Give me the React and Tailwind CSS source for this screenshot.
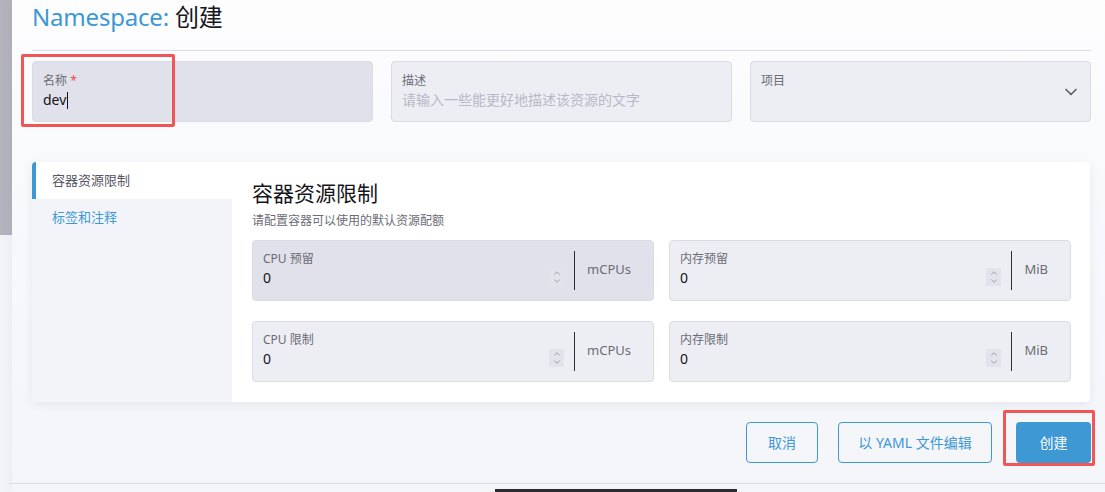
import { ChevronDown, ChevronUp } from 'lucide-react';

const font = { fontFamily: '"Noto Sans", "Noto Sans CJK SC", sans-serif' };

function Stepper() {
  return (
    <div className="w-[15px] h-[18px] bg-[#e3e4eb] flex flex-col items-center justify-center text-[#7a7b86]">
      <ChevronUp size={10} strokeWidth={1.6} className="-mb-[2px]" />
      <ChevronDown size={10} strokeWidth={1.6} />
    </div>
  );
}

function UnitField({ label, unit, hover }) {
  return (
    <div
      className={`h-[61px] rounded-[4px] border border-[#dadbe3] flex items-stretch ${
        hover ? 'bg-[#e0e1ea]' : 'bg-[#edeef3]'
      }`}
    >
      <div className="flex-1 pl-[10px] pt-[10px]">
        <div className="text-[12px] leading-[16px] text-[#6b6c76]">{label}</div>
        <div className="text-[14px] leading-[20px] text-[#141419] mt-[1px]">0</div>
      </div>
      <div className="flex items-center pr-[10px] pt-[12px]">
        <Stepper />
      </div>
      <div className="flex items-center py-[10px]">
        <div className="w-px h-full bg-[#2e2e36]" />
      </div>
      <div className="flex items-center pl-[12px] pr-[22px] pb-[2px] text-[13px] text-[#6b6c76]">{unit}</div>
    </div>
  );
}

export default function App() {
  return (
    <div className="relative w-full h-[492px] overflow-hidden bg-[#f4f5f9] flex" style={font}>
      {/* left strip */}
      <div className="w-[12px] shrink-0">
        <div className="h-[235px] bg-[#b4b4bf]" />
      </div>

      <div className="flex-1 flex flex-col bg-linear-to-b from-[#fdfdfe] via-[#f7f8fb] to-[#f4f5f9] shadow-[-6px_0_10px_rgba(0,0,0,0.03)]">
        <div className="pl-[20px] pr-[14px] flex-1">
          {/* title */}
          <div className="h-[51px] border-b border-[#dcdce6] pt-[1px]">
            <h1 className="text-[24px] leading-[32px] tracking-[-0.2px]">
              <span className="text-[#3d98d3]">Namespace: </span>
              <span className="text-[#17171c]">创建</span>
            </h1>
          </div>

          {/* main fields */}
          <div className="grid grid-cols-3 gap-[18px] mt-[10px]">
            <div className="h-[61px] rounded-[4px] border border-[#dadbe3] bg-[#e0e1ea] px-[10px] pt-[11px]">
              <div className="text-[12px] leading-[16px] text-[#6b6c76]">
                名称 <span className="text-[#ef4b4b]">*</span>
              </div>
              <div className="text-[14px] leading-[20px] text-[#141419] mt-[1px] flex items-center">
                dev<span className="w-px h-[17px] bg-[#141419] ml-[1px]" />
              </div>
            </div>
            <div className="h-[61px] rounded-[4px] border border-[#dadbe3] bg-[#edeef3] px-[10px] pt-[11px]">
              <div className="text-[12px] leading-[16px] text-[#6b6c76]">描述</div>
              <div className="text-[14px] leading-[20px] text-[#b7b9c8] mt-[1px]">请输入一些能更好地描述该资源的文字</div>
            </div>
            <div className="h-[61px] rounded-[4px] border border-[#dadbe3] bg-[#edeef3] pl-[10px] pr-[9px] pt-[11px] flex justify-between">
              <div className="text-[12px] leading-[16px] text-[#6b6c76]">项目</div>
              <ChevronDown size={20} strokeWidth={2} className="text-[#5d5e68] mt-[9px]" />
            </div>
          </div>

          {/* tab card */}
          <div className="mt-[40px] h-[240px] mr-px flex rounded-[4px] overflow-hidden shadow-[0_3px_10px_rgba(40,40,70,0.07)]">
            <div className="w-[200px] bg-[#f3f4f9] shrink-0">
              <div className="h-[37px] bg-white border-l-4 border-[#3d98d3] pl-[16px] flex items-center text-[13px] text-[#55565f]">
                容器资源限制
              </div>
              <div className="h-[37px] pl-[20px] flex items-center text-[13px] text-[#3d98d3]">标签和注释</div>
            </div>
            <div className="flex-1 bg-white pl-[20px] pr-[19px] pt-[17px]">
              <h2 className="text-[21px] leading-[28px] text-[#141419]">容器资源限制</h2>
              <p className="text-[12px] leading-[16px] text-[#6b6c76] mt-[6px]">请配置容器可以使用的默认资源配额</p>
              <div className="grid grid-cols-2 gap-x-[15px] gap-y-[20px] mt-[11px]">
                <UnitField label="CPU 预留" unit="mCPUs" hover />
                <UnitField label="内存预留" unit="MiB" />
                <UnitField label="CPU 限制" unit="mCPUs" />
                <UnitField label="内存限制" unit="MiB" />
              </div>
            </div>
          </div>

          {/* actions */}
          <div className="flex justify-end mt-[20px]">
            <button className="h-[41px] w-[72px] rounded-[4px] border border-[#3d98d3] text-[#3d98d3] text-[14px] bg-transparent">
              取消
            </button>
            <button className="h-[41px] w-[154px] ml-[20px] rounded-[4px] border border-[#3d98d3] text-[#3d98d3] text-[14px] bg-transparent">
              以 YAML 文件编辑
            </button>
            <button className="h-[41px] w-[75px] ml-[24px] rounded-[4px] bg-[#3d98d3] text-white text-[14px]">创建</button>
          </div>
        </div>

        {/* bottom rule */}
        <div className="h-[9px] border-t border-[#dcdce2] -ml-[3px]" />
      </div>

      {/* overlays */}
      <div className="absolute left-[21px] top-[54px] w-[154px] h-[73px] border-[3px] border-[#f25555] rounded-[2px]" />
      <div className="absolute left-[1003px] top-[410px] w-[92px] h-[56px] border-[3px] border-[#f25555] rounded-[2px]" />
      <div className="absolute left-[495px] top-[489px] w-[242px] h-[3px] bg-[#2b2b30]" />
    </div>
  );
}
